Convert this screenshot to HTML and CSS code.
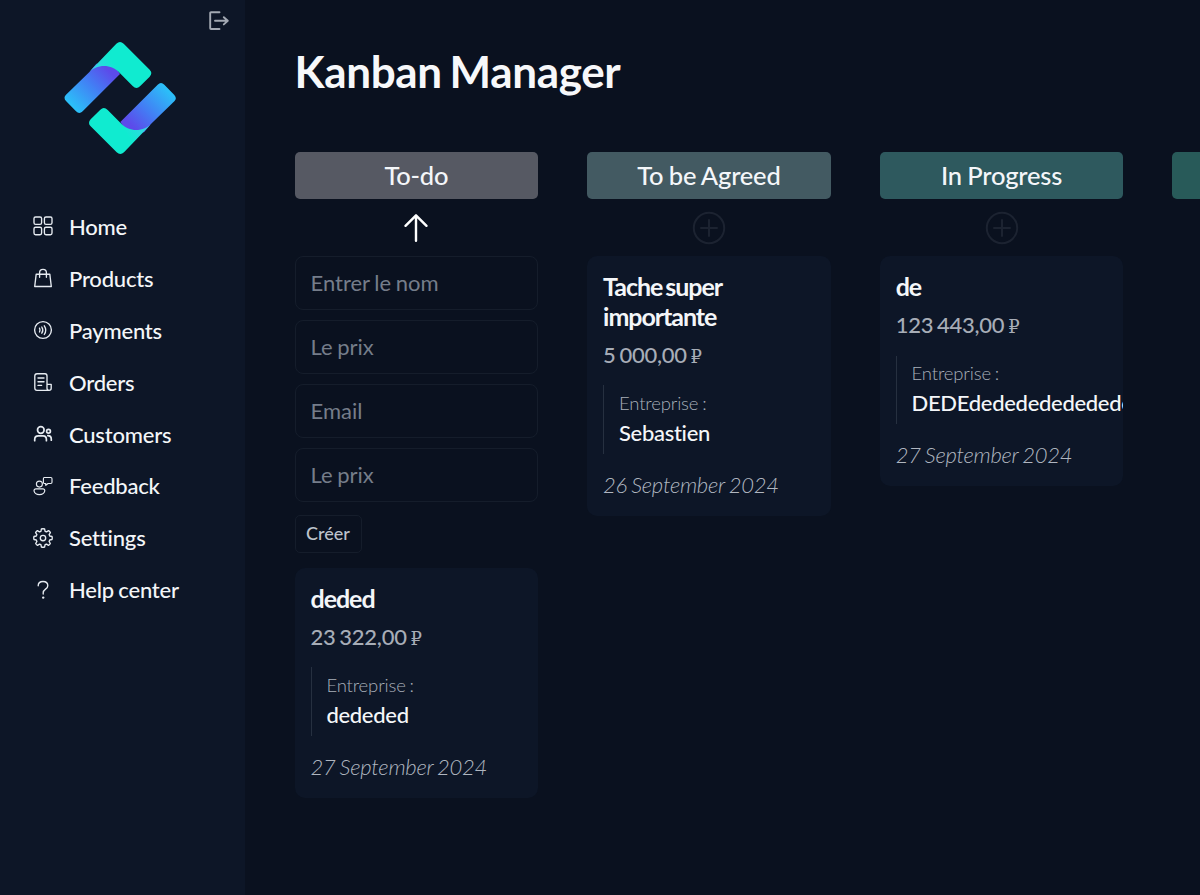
FILE: index.html
```
<!DOCTYPE html>
<html lang="fr">
<head>
<meta charset="utf-8">
<title>Kanban Manager</title>
<link rel="stylesheet" href="styles.css">
</head>
<body>
<div class="app">
  <aside class="sidebar">
    <button class="logout" aria-label="Logout">
      <svg width="22" height="22" viewBox="0 0 22 22"><path d="M11.5 2.2H3Q2.2 2.2 2.2 3V18.2Q2.2 19 3 19H11.5M7 10.8H19.5M15.8 7.2l4 3.6-4 3.6"/></svg>
    </button>
    <svg class="logo" width="114" height="114" viewBox="190 122 342 342">
      <defs>
        <linearGradient id="band" gradientUnits="userSpaceOnUse" x1="216" y1="316" x2="330" y2="202">
          <stop offset="0" stop-color="#2bc0f8"/><stop offset=".55" stop-color="#437df4"/><stop offset=".95" stop-color="#5c4bea"/>
        </linearGradient>
        <linearGradient id="mint" gradientUnits="userSpaceOnUse" x1="268" y1="216" x2="330" y2="170">
          <stop offset="0" stop-color="#43cdea"/><stop offset="1" stop-color="#10ebd0"/>
        </linearGradient>
        <g id="half">
          <path fill="url(#band)" d="M270 214L199 283Q190 292 199 302L229 333Q239 343 249 333L361 221L340 190H290Z"/>
          <path fill="url(#mint)" d="M265 219C292 190 335 190 361 219L399 257Q410 269 421 258L450 229Q460 218 450 208L372 130Q361 120 350 130Z"/>
        </g>
      </defs>
      <use href="#half"/>
      <use href="#half" transform="rotate(180 361.5 293)"/>
    </svg>
    <nav class="nav">
      <a class="nav-item"><svg class="icon" viewBox="0 0 20 20"><rect x="1" y="1" width="7.6" height="7.3" rx="1.6"/><rect x="11.4" y="1" width="7.6" height="7.3" rx="1.6"/><rect x="1" y="11.2" width="7.6" height="7.5" rx="1.6"/><rect x="11.4" y="11.2" width="7.6" height="7.5" rx="1.6"/></svg>Home</a>
      <a class="nav-item"><svg class="icon" viewBox="0 0 20 20"><path d="M3.2 6.2H16.8L18.3 18.5H1.7ZM6.6 9.2V4.8a3.4 3.4 0 0 1 6.8 0V9.2"/></svg>Products</a>
      <a class="nav-item"><svg class="icon" viewBox="0 0 20 20"><circle cx="10" cy="10" r="8.4"/><path d="M6.5 8.2Q7.5 10 6.5 12M8.8 7Q10.8 10 8.8 13.2M11.3 5.8Q14.2 10 11.3 14.5"/></svg>Payments</a>
      <a class="nav-item"><svg class="icon" viewBox="0 0 20 20"><path d="M16 18.3H4Q1.8 18.3 1.8 16V4Q1.8 1.7 4 1.7H12Q14 1.7 14 4V16.3A2 2 0 0 0 18.2 16.3V12.4H14M5 6H11M5 9.7H11M5 13.4H8.6"/></svg>Orders</a>
      <a class="nav-item"><svg class="icon bold" viewBox="0 0 20 20"><circle cx="7.8" cy="6" r="3.3"/><circle cx="15.5" cy="7.2" r="1.9"/><path d="M1.7 16.7V15.5Q1.7 11.9 5.3 11.9H10Q13.4 11.9 13.4 15.5V16.7M14.8 11.6Q18.3 11.6 18.3 15.2V16.2"/></svg>Customers</a>
      <a class="nav-item"><svg class="icon thin" viewBox="0 0 20 20"><circle cx="6.4" cy="8.1" r="3"/><path d="M3 12.9H9.8Q11.8 12.9 11.8 14.9Q11 18.6 6.4 18.6T1 14.9Q1 12.9 3 12.9ZM11.2 1.5H17.8Q19 1.5 19 2.7V6.3Q19 7.5 17.8 7.5H15L12.8 9.4V7.5H11.2Q10.4 7.5 10.4 6.3V2.7Q10.4 1.5 11.2 1.5Z"/></svg>Feedback</a>
      <a class="nav-item"><svg class="icon" viewBox="0 0 20 20"><circle cx="10" cy="10" r="2.7"/><path d="M8.4 1Q10 .4 11.6 1L12.1 3.3L13.5 3.9L15.6 2.7Q16.8 3.4 17.4 4.6L16.1 6.6L16.7 8L19 8.5Q19.5 10 19 11.5L16.7 12L16.1 13.4L17.3 15.5Q16.7 16.8 15.5 17.3L13.5 16.1L12.1 16.7L11.6 19Q10 19.5 8.4 19L7.9 16.7L6.5 16.1L4.5 17.3Q3.3 16.7 2.7 15.5L3.9 13.4L3.3 12L1 11.5Q.5 10 1 8.5L3.3 8L3.9 6.6L2.6 4.6Q3.2 3.4 4.4 2.7L6.5 3.9L7.9 3.3Z"/></svg>Settings</a>
      <a class="nav-item"><svg class="icon" viewBox="0 0 20 20"><path d="M5.2 5.8C5.2 3 7.3 1.5 10 1.5S14.8 3.1 14.8 5.7C14.8 9.2 10.2 9.1 10.2 12.8V14"/><circle class="dot" cx="10.2" cy="17.6" r="1.2"/></svg>Help center</a>
    </nav>
  </aside>

  <main class="main">
    <h1 class="title">Kanban Manager</h1>
    <div class="board">
      <section class="column">
        <h2 class="column-head todo">To-do</h2>
        <button class="toggle open" aria-label="Fermer"><svg width="28" height="32" viewBox="0 0 28 32"><path d="M14 28.7V3.5M3.5 13.8L14 3.3L24.5 13.8"/></svg></button>
        <form class="form">
          <input class="field" placeholder="Entrer le nom">
          <input class="field" placeholder="Le prix">
          <input class="field" placeholder="Email">
          <input class="field" placeholder="Le prix">
          <button class="submit" type="button">Créer</button>
        </form>
        <article class="card">
          <h3 class="card-name">deded</h3>
          <p class="price">23 322,00 <span class="ruble">₽</span></p>
          <div class="company"><span class="label">Entreprise :</span><span class="company-name">dededed</span></div>
          <p class="date">27 September 2024</p>
        </article>
      </section>
      <section class="column">
        <h2 class="column-head agreed">To be Agreed</h2>
        <button class="toggle" aria-label="Ajouter"><svg width="34" height="34" viewBox="0 0 34 34"><circle cx="17" cy="17" r="15.2"/><path d="M17 9V25M9 17H25"/></svg></button>
        <article class="card">
          <h3 class="card-name">Tache super importante</h3>
          <p class="price">5 000,00 <span class="ruble">₽</span></p>
          <div class="company"><span class="label">Entreprise :</span><span class="company-name">Sebastien</span></div>
          <p class="date">26 September 2024</p>
        </article>
      </section>
      <section class="column">
        <h2 class="column-head progress">In Progress</h2>
        <button class="toggle" aria-label="Ajouter"><svg width="34" height="34" viewBox="0 0 34 34"><circle cx="17" cy="17" r="15.2"/><path d="M17 9V25M9 17H25"/></svg></button>
        <article class="card">
          <h3 class="card-name">de</h3>
          <p class="price">123 443,00 <span class="ruble">₽</span></p>
          <div class="company"><span class="label">Entreprise :</span><span class="company-name">DEDEdededededededed</span></div>
          <p class="date">27 September 2024</p>
        </article>
      </section>
      <section class="column">
        <h2 class="column-head done"></h2>
      </section>
    </div>
  </main>
</div>
</body>
</html>
```
FILE: styles.css
```
* { box-sizing: border-box; }
body { margin: 0; background: #0a111f; color: #f4f6f9; font-family: Lato, "Liberation Sans", sans-serif; font-variant-ligatures: none; letter-spacing: -0.2px; word-spacing: -1px; }
h1, h2, h3, p { margin: 0; }
button { background: none; border: 0; padding: 0; font: inherit; color: inherit; letter-spacing: inherit; }
svg { display: block; fill: none; stroke-linecap: round; stroke-linejoin: round; }

.app { display: flex; width: 1200px; height: 895px; overflow: hidden; }
.sidebar { flex: none; width: 245px; background: #0d1627; display: flex; flex-direction: column; }
.logout { align-self: flex-end; margin: 10px 15px 0 0; }
.logout svg { stroke: #a3a9b3; stroke-width: 1.9; }
.logo { margin: 9px 0 0 63.3px; }
.nav { display: flex; flex-direction: column; margin-top: 46px; padding-left: 33.4px; }
.nav-item { display: flex; align-items: center; gap: 15.6px; height: 51.9px; font-size: 22px; font-weight: 500; line-height: 30px; }
.icon { width: 20px; height: 20px; stroke: #e6ebf1; stroke-width: 1.35; margin-top: -1px; }
.icon.bold { stroke-width: 1.7; }
.icon.thin { stroke-width: 1.15; }
.dot { fill: #e6ebf1; stroke: none; }

.main { flex: 1; min-width: 0; padding: 45px 0 0 49.5px; }
.title { font-size: 44px; line-height: 52px; font-weight: 700; letter-spacing: -0.35px; word-spacing: -2.5px; color: #f7f8fa; }
.board { display: flex; gap: 48.9px; margin-top: 55.4px; }
.column { flex: none; width: 243.7px; display: flex; flex-direction: column; }
.column-head { height: 47px; border-radius: 5px; text-align: center; font-size: 25.5px; line-height: 47px; font-weight: 500; letter-spacing: -0.2px; word-spacing: -0.8px; }
.todo { background: #565963; }
.agreed { background: #435a62; }
.progress { background: #2e595e; }
.done { background: #285a59; }
.toggle { height: 57px; display: flex; justify-content: center; align-items: center; }
.toggle svg { stroke: #1c2331; stroke-width: 2; }
.toggle.open svg { stroke: #fff; stroke-width: 2.4; }

.form { display: flex; flex-direction: column; align-items: flex-start; gap: 10px; margin-bottom: 15px; }
.field { width: 100%; height: 54px; padding: 0 15px 1px; border: 1px solid #151d2b; border-radius: 8px; background: transparent; color: #f8fafc; font: 400 22px Lato, sans-serif; letter-spacing: 0; word-spacing: -1px; outline: none; }
.field::placeholder { color: #757d8a; opacity: 1; }
.submit { height: 38px; width: 67px; margin-top: 2.5px; padding-bottom: 1px; border: 1px solid #151d2b; border-radius: 5px; color: #bec3cc; font-size: 18px; letter-spacing: 0; font-weight: 500; }

.card { padding: 16px; border-radius: 10px; background: #0d1627; overflow: hidden; }
.card-name { font-size: 25px; line-height: 29.4px; font-weight: 700; letter-spacing: -1.05px; word-spacing: -2px; }
.price { margin-top: 8.5px; font-size: 22px; line-height: 30px; font-weight: 500; letter-spacing: -0.25px; word-spacing: -1.5px; color: #a7adb7; }
.ruble { font: 400 18px/20px "DejaVu Serif", serif; }
.company { display: flex; flex-direction: column; margin-top: 15.5px; height: 68.5px; padding: 2.6px 0 0 14.9px; border-left: 1.5px solid #263040; white-space: nowrap; }
.label { font-size: 18.5px; line-height: 30px; font-weight: 300; letter-spacing: -0.15px; color: #a8afb9; }
.company-name { font-size: 22px; line-height: 30px; font-weight: 500; letter-spacing: -0.3px; }
.date { margin-top: 16px; font-size: 22px; line-height: 30px; font-style: italic; font-weight: 300; letter-spacing: -0.25px; word-spacing: -1.2px; color: #b0b6c0; }
```
